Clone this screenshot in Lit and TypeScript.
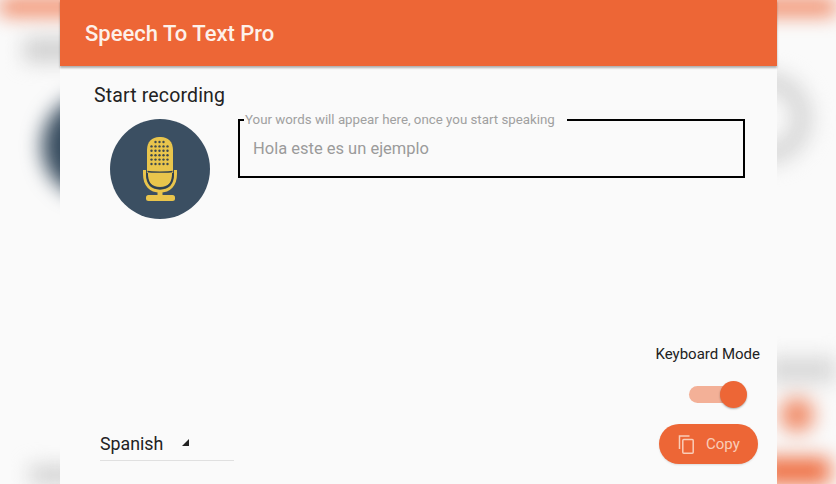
import { LitElement, html, css, svg } from "lit";
import { customElement } from "lit/decorators.js";

@customElement("app-root")
export class AppRoot extends LitElement {
  static styles = css`
    :host { display: block; width: 836px; height: 484px; position: relative; overflow: hidden; background: #fafafa; font-family: Roboto, "Liberation Sans", sans-serif; }
    .backdrop { position: absolute; inset: 0; overflow: hidden; filter: blur(10px); }
    .blob { position: absolute; }
    .b-top { left: -20px; right: -20px; top: -20px; height: 34px; background: #ee6a3c; }
    .b-hl { left: 24px; top: 38px; width: 60px; height: 24px; background: #cfcfcf; }
    .b-circ { left: 42px; top: 94px; width: 104px; height: 104px; border-radius: 50%; background: #34495c; }
    .b-ring { left: 724px; top: 72px; width: 88px; height: 92px; border-radius: 50%; border: 20px solid #d6d6d6; box-sizing: border-box; }
    .b-kb { right: -10px; top: 357px; width: 80px; height: 26px; background: #d8d8d8; }
    .b-tog { left: 780px; top: 398px; width: 34px; height: 34px; border-radius: 50%; background: #ee6a3c; opacity: .8; }
    .b-copy { left: 760px; top: 458px; width: 70px; height: 50px; background: #ee6a3c; }
    .b-bl { left: 30px; top: 466px; width: 50px; height: 30px; background: #cfcfcf; }
    .card { position: absolute; left: 60px; top: 0; width: 717px; height: 484px; background: #fafafa; display: flex; flex-direction: column; box-sizing: border-box; }
    .bar { height: 66px; flex: none; background: #ed6636; box-shadow: 0 2px 2px rgba(0,0,0,.3); display: flex; align-items: center; padding-left: 25px; color: #fdf1ea; font-size: 22px; font-weight: 500; }
    .main { flex: 1; display: flex; flex-direction: column; padding: 19px 19px 20px 34px; min-height: 0; }
    .title { font-size: 19.5px; line-height: 22px; color: #222; letter-spacing: .15px; }
    .row { display: flex; align-items: flex-start; margin-top: 12px; }
    .mic { width: 100px; height: 100px; flex: none; margin: 0 0 0 16px; display: block; }
    .field { position: relative; margin: 0 0 0 28px; width: 507px; height: 59px; box-sizing: border-box; border: 2px solid #000; padding: 18px 13px 0; font-size: 16.5px; line-height: 20px; color: #9b9b9b; }
    .legend { position: absolute; left: 4px; top: -9px; padding: 0 12px 0 1px; background: #fafafa; font-size: 13.3px; line-height: 16px; color: #a0a0a0; }
    .bottom { margin-top: auto; display: flex; justify-content: space-between; align-items: flex-end; }
    .lang { width: 134px; margin: 0 0 3px 6px; box-sizing: border-box; border-bottom: 1px solid #e0e0e0; height: 34px; padding-top: 4px; display: flex; font-size: 17.8px; line-height: 26px; color: #222; }
    .tri { width: 9px; height: 9px; margin: 7px 0 0 18px; flex: none; display: block; }
    .right { display: flex; flex-direction: column; align-items: flex-end; }
    .kb { font-size: 15px; line-height: 18px; color: #222; margin-right: -2px; }
    .toggle { position: relative; width: 52px; height: 17px; margin: 23px 17px 0 0; background: #f3b097; border-radius: 9px; }
    .knob { position: absolute; right: -6px; top: -5px; width: 27px; height: 27px; border-radius: 50%; background: #ed6636; box-shadow: 0 1px 2px rgba(0,0,0,.3); }
    .copy { margin-top: 21px; width: 99px; height: 40px; border-radius: 20px; background: #ed6636; display: flex; align-items: center; box-sizing: border-box; padding-left: 19px; gap: 12px; color: #f9cdb9; font-size: 15px; box-shadow: 0 1px 2px rgba(0,0,0,.12); }
    .copy svg { width: 16px; height: 19px; display: block; }
  `;

  private dots() {
    const out = [];
    const xs = [41, 45, 49, 53, 57];
    for (let r = 0; r < 6; r++) {
      for (const x of xs) {
        if (r === 0 && (x === 41 || x === 57)) continue;
        out.push(svg`<circle cx=${x + 0.5} cy=${23 + r * 4.4} r="1.2"/>`);
      }
    }
    return out;
  }

  render() {
    return html`
      <div class="backdrop">
        <div class="blob b-top"></div><div class="blob b-hl"></div><div class="blob b-circ"></div>
        <div class="blob b-ring"></div><div class="blob b-kb"></div><div class="blob b-tog"></div>
        <div class="blob b-copy"></div><div class="blob b-bl"></div>
      </div>
      <div class="card">
        <div class="bar"><span>Speech To Text Pro</span></div>
        <div class="main">
          <div class="title">Start recording</div>
          <div class="row">
            <svg class="mic" viewBox="0 0 100 100">
              <circle cx="50" cy="50" r="50" fill="#3b4f62"/>
              <path fill="#e9c54c" d="M37 31c0-8 5-13 12-13h2c7 0 12 5 12 13v23c0 9-5 14-13 14s-13-5-13-14z"/>
              <path fill="none" stroke="#e9c54c" stroke-width="3" d="M34.5 51v4c0 11 6 17 15.5 17s15.500-6 15.500-17v-4"/>
              <path fill="none" stroke="#2f3f4e" stroke-width="1.8" d="M37 54c0 10 5 15.5 13 15.5S63 64 63 54"/>
              <path fill="none" stroke="#2f3f4e" stroke-width="1.4" d="M37.500 52.500c3 .8 22 .8 25 0"/>
              <rect x="47.500" y="71" width="5" height="6" fill="#e9c54c"/>
              <rect x="36" y="76" width="29" height="6" rx="2.500" fill="#e9c54c"/>
              <g fill="#3f4a4f">${this.dots()}</g>
            </svg>
            <div class="field">
              <div class="legend">Your words will appear here, once you start speaking</div>
              Hola este es un ejemplo
            </div>
          </div>
          <div class="bottom">
            <div class="lang">Spanish
              <svg class="tri" viewBox="0 0 9 9"><path d="M8 1v7H1z" fill="#222"/></svg>
            </div>
            <div class="right">
              <div class="kb">Keyboard Mode</div>
              <div class="toggle"><div class="knob"></div></div>
              <div class="copy">
                <svg viewBox="0 0 16 19" fill="none" stroke="#f9cdb9" stroke-width="1.5"><path d="M11.500 1H1.500v13"/><rect x="4.800" y="4.500" width="10.400" height="13.700" rx="1"/></svg>
                <span>Copy</span>
              </div>
            </div>
          </div>
        </div>
      </div>
    `;
  }
}
